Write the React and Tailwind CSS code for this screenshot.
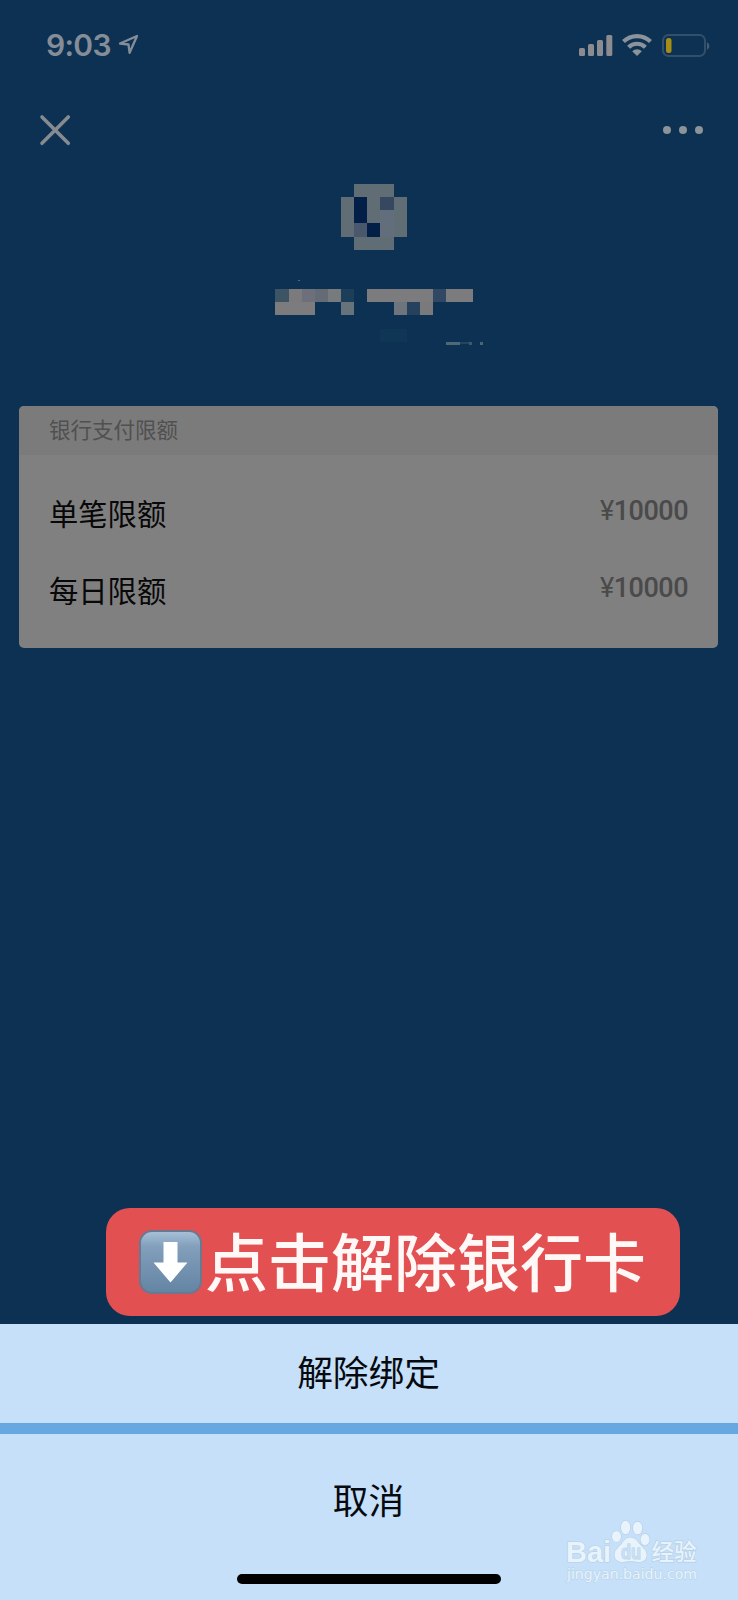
const limites = [
    { nombre: '单笔限额', valor: '10000' },
    { nombre: '每日限额', valor: '10000' },
]

// mosaic blocks over the avatar, the name and the card number: x, y, w, h, color
const bloques = [
    [94, 14, 39.5, 13, '#606d75'],
    [81, 27, 66, 40, '#606d75'],
    [94, 66.5, 39.5, 13, '#606d75'],
    [120, 40, 13.5, 27, '#626e7c'],
    [94, 27, 13, 26.5, '#011f47'],
    [120, 27, 13.5, 13, '#36485f'],
    [94, 53, 13, 13.5, '#4a586d'],
    [107, 53, 13.2, 13.5, '#011f47'],
    [15.3, 119, 13.2, 13, '#3d5465'],
    [28.5, 119, 13.2, 13, '#7b7b7e'],
    [41.7, 119, 13.1, 13, '#6d707a'],
    [54.8, 119, 13.2, 13, '#656b75'],
    [68, 119, 13, 13, '#777b7e'],
    [81, 119, 13.2, 13, '#1c3e58'],
    [107.2, 119, 66, 13, '#7c7b7d'],
    [173, 119, 13, 13, '#304863'],
    [186, 119, 26.7, 13, '#7c7b7d'],
    [15.3, 132, 39.5, 13.2, '#7c7b7d'],
    [81, 132, 13.2, 13.2, '#67737a'],
    [133.6, 132, 13.2, 13.2, '#6e757c'],
    [146.8, 132, 13.2, 13.2, '#25415d'],
    [160, 132, 13.2, 13.2, '#7a7a7d'],
    [120.4, 158.5, 26.4, 13, '#103656'],
    [186, 171.5, 14, 3.5, '#4f6878'],
    [200, 172.2, 9, 1.3, '#24455f'],
    [209, 171.5, 3, 3.5, '#3d586c'],
    [220, 171.5, 2.5, 3.5, '#4b6476'],
    [38, 109.5, 2, 1.5, '#50687a'],
]

const BarraEstado = () => (
    <div className="flex h-[90px] items-start justify-between pr-[27px] pl-[46px]">
        <div className="flex pt-[26px]">
            <span className="w-[68px] text-[30px] leading-[38px] font-semibold tracking-[-0.7px]">9:03</span>
            <svg className="mt-[8px] ml-[4px]" width="21" height="21" viewBox="0 0 21 21" fill="none" stroke="currentColor" strokeWidth="2.3" strokeLinejoin="round">
                <path d="M19 2 L2 9.500 L10.500 10.500 L11.600 18.800 Z" />
            </svg>
        </div>
        <div className="flex items-start pt-[34px]">
            <svg width="34" height="23" viewBox="0 0 34 23" fill="#8b8b90">
                <rect x="0" y="14" width="6" height="8" rx="1.5" />
                <rect x="9" y="10" width="6" height="12" rx="1.5" />
                <rect x="18" y="6" width="6" height="16" rx="1.5" />
                <rect x="27.3" y="1" width="6" height="21" rx="1.5" />
            </svg>
            <svg className="ml-[9px]" width="30" height="23" viewBox="0 0 30 23" fill="none" stroke="#8d939b" strokeWidth="4.2">
                <path d="M1.5 7.6 A19.5 19.5 0 0 1 28.5 7.6" />
                <path d="M6.6 13.2 A12 12 0 0 1 23.4 13.2" />
                <path d="M10.2 17.2 A7 7 0 0 1 19.8 17.2 L15 22 Z" fill="#8d939b" stroke="none" />
            </svg>
            <svg className="ml-[10px]" width="49" height="24" viewBox="0 0 49 24">
                <rect x="1" y="1" width="42" height="21" rx="5.5" fill="none" stroke="#344f69" strokeWidth="2" />
                <rect x="4" y="4" width="5.5" height="15" rx="2.5" fill="#a68e14" />
                <path d="M45 8 a4.5 4.5 0 0 1 0 8 z" fill="#455d73" />
            </svg>
        </div>
    </div>
)

const Cabecera = () => (
    <div className="flex h-[80px] items-center justify-between pr-[35px] pl-[39px]">
        <svg width="32" height="32" viewBox="0 0 32 32" stroke="#858b90" strokeWidth="3.6" strokeLinecap="round">
            <path d="M3 3 L29.3 29.3 M29.3 3 L3 29.3" />
        </svg>
        <div className="flex gap-2">
            <span className="size-2 rounded-full bg-[#8c9399]" />
            <span className="size-2 rounded-full bg-[#8c9399]" />
            <span className="size-2 rounded-full bg-[#8c9399]" />
        </div>
    </div>
)

const Marca = () => (
    <svg className="absolute top-[1516px] left-[560px]" width="150" height="70" viewBox="0 0 150 70" fill="#e9f3fc" stroke="#b3cfe6" strokeWidth="1.2" paintOrder="stroke">
        <text x="6" y="45.5" fontFamily="Liberation Sans" fontWeight="700" fontSize="29" textLength="45">Bai</text>
        <ellipse cx="56.5" cy="20.5" rx="4.5" ry="5.5" />
        <ellipse cx="65.6" cy="11.5" rx="4.7" ry="6.7" />
        <ellipse cx="77.6" cy="12" rx="4.7" ry="6.3" />
        <ellipse cx="85" cy="23.5" rx="4.5" ry="5.8" />
        <path d="M70.500 21.500c-5 0-7 4-9.500 7-3.500 3.500-6.500 6-6.500 10.500 0 4.500 3.500 7 8 7 3 0 5-.7 8-.7s5 .7 8 .7c5 0 8.200-2.500 8.200-7 0-4.500-3.500-7-6.700-10.500-2.500-3-4.500-7-9.500-7z" />
        <text x="61" y="43" fontFamily="Liberation Sans" fontWeight="700" fontSize="20" textLength="20" lengthAdjust="spacingAndGlyphs" fill="#c8e0f5" strokeWidth="1">du</text>
        <text x="91.5" y="43.5" fontFamily="Noto Sans CJK SC" fontWeight="500" fontSize="22.5">经验</text>
        <text x="7" y="63" fontFamily="DejaVu Sans" fontSize="14" textLength="130" lengthAdjust="spacingAndGlyphs" strokeWidth="0.8">jingyan.baidu.com</text>
    </svg>
)

export default function App() {
    return (
        <div className="relative flex h-[1600px] w-[738px] flex-col overflow-hidden bg-[#0d3152] font-['Inter','Noto_Sans_CJK_SC',sans-serif] text-[#848d98]">
            <BarraEstado />
            <Cabecera />

            <svg className="ml-[260px] shrink-0" width="240" height="190" viewBox="0 0 240 190" shapeRendering="crispEdges">
                {bloques.map(([x, y, w, h, color], i) => (
                    <rect key={i} x={x} y={y} width={w} height={h} fill={color} />
                ))}
            </svg>

            <div className="mr-[20px] ml-[19px] mt-[46px] h-[242px] shrink-0 overflow-hidden rounded-[5px] bg-[#808080]">
                <div className="h-[49px] bg-[#7b7b7b] pl-[30px] text-[21.5px] leading-[48px] text-[#505050]">银行支付限额</div>
                <div className="pt-[21px]">
                    {limites.map((l) => (
                        <div className="flex h-[77px] items-center justify-between pr-[30px] pl-[30px]" key={l.nombre}>
                            <span className="text-[29.3px] text-[#080808]">{l.nombre}</span>
                            <span className="mb-[6px] font-['Roboto',sans-serif] text-[27px] font-medium tracking-[-0.5px] text-[#4a4a4a]">
                                <span className="font-normal">¥</span>{l.valor}
                            </span>
                        </div>
                    ))}
                </div>
            </div>

            <div className="mt-auto mb-[8px] ml-[106px] flex h-[108px] w-[574px] shrink-0 items-center rounded-[24px] bg-[#e35052] pl-[33px]">
                <svg width="64" height="64" viewBox="0 0 64 64">
                    <defs>
                        <linearGradient id="boton" x1="0" y1="0" x2="0" y2="1">
                            <stop offset="0" stopColor="#a9c2d9" />
                            <stop offset="0.25" stopColor="#829fbb" />
                            <stop offset="1" stopColor="#6484a4" />
                        </linearGradient>
                    </defs>
                    <rect x="1" y="1" width="61" height="62" rx="12" fill="url(#boton)" stroke="#6a7890" strokeWidth="2" />
                    <path d="M24.5 12 h14 v20.5 h10 L31.5 52.5 L14.5 32.5 h10 z" fill="#fff" />
                </svg>
                <span className="mt-[2px] ml-[2px] text-[63px] leading-[90px] font-medium whitespace-nowrap text-[#fff8f6]">点击解除银行卡</span>
            </div>

            <div className="shrink-0 text-[35.7px] text-[#06090f]">
                <div className="flex h-[99px] items-center justify-center bg-[#c5e0f8] pr-[1px] pt-[1px]">解除绑定</div>
                <div className="h-[11px] bg-[#67a8e1]" />
                <div className="flex h-[166px] flex-col items-center bg-[#c5e0f8]">
                    <span className="mt-[41px] mr-[1px] leading-[52px]">取消</span>
                    <div className="mt-[47px] h-[10px] w-[264px] rounded-full bg-black" />
                </div>
            </div>

            <Marca />
        </div>
    )
}
